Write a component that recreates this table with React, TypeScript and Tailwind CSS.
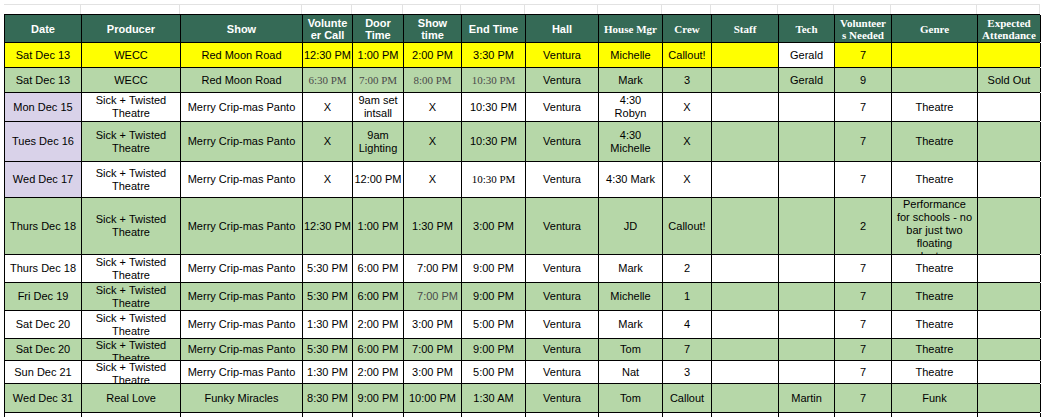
import React from 'react';
import { clsx } from 'clsx';

const COLS =
  'grid grid-cols-[77px_99px_122px_50px_51px_58px_64px_73px_64px_49px_67px_56px_57px_86px_63px]';

const Y = 'bg-[#ffff00]';
const G = 'bg-[#b6d7a8]';
const W = 'bg-white';
const L = 'bg-[#d9d2e9]';

type CellDef =
  | string
  | { t: string; bg?: string; serif?: boolean; gray?: boolean; right?: boolean };

type RowDef = { h: string; bg: string; c: CellDef[] };

const headers: { t: string; serif?: boolean }[] = [
  { t: 'Date' },
  { t: 'Producer' },
  { t: 'Show' },
  { t: 'Volunte\ner Call' },
  { t: 'Door\nTime' },
  { t: 'Show\ntime' },
  { t: 'End Time' },
  { t: 'Hall' },
  { t: 'House Mgr', serif: true },
  { t: 'Crew', serif: true },
  { t: 'Staff', serif: true },
  { t: 'Tech', serif: true },
  { t: 'Volunteer\ns Needed', serif: true },
  { t: 'Genre', serif: true },
  { t: 'Expected\nAttendance', serif: true },
];

const STW = 'Sick + Twisted\nTheatre';
const PANTO = 'Merry Crip-mas Panto';

const rows: RowDef[] = [
  {
    h: 'h-[25px]',
    bg: Y,
    c: ['Sat Dec 13', 'WECC', 'Red Moon Road', '12:30 PM', '1:00 PM', '2:00 PM', '3:30 PM', 'Ventura', 'Michelle', 'Callout!', '', { t: 'Gerald', bg: W }, '7', '', ''],
  },
  {
    h: 'h-[25px]',
    bg: G,
    c: [
      'Sat Dec 13', 'WECC', 'Red Moon Road',
      { t: '6:30 PM', serif: true, gray: true },
      { t: '7:00 PM', serif: true, gray: true },
      { t: '8:00 PM', serif: true, gray: true },
      { t: '10:30 PM', serif: true, gray: true },
      'Ventura', 'Mark', '3', '', 'Gerald', '9', '', 'Sold Out',
    ],
  },
  {
    h: 'h-[29px]',
    bg: W,
    c: [{ t: 'Mon Dec 15', bg: L }, STW, PANTO, 'X', '9am set\nintsall', 'X', '10:30 PM', 'Ventura', '4:30\nRobyn', 'X', '', '', '7', 'Theatre', ''],
  },
  {
    h: 'h-[40px]',
    bg: G,
    c: [{ t: 'Tues Dec 16', bg: L }, STW, PANTO, 'X', '9am\nLighting', 'X', '10:30 PM', 'Ventura', '4:30\nMichelle', 'X', '', '', '7', 'Theatre', ''],
  },
  {
    h: 'h-[36px]',
    bg: W,
    c: [{ t: 'Wed Dec 17', bg: L }, STW, PANTO, 'X', '12:00 PM', 'X', { t: '10:30 PM', serif: true }, 'Ventura', '4:30 Mark', 'X', '', '', '7', 'Theatre', ''],
  },
  {
    h: 'h-[57px]',
    bg: G,
    c: ['Thurs Dec 18', STW, PANTO, '12:30 PM', '1:00 PM', '1:30 PM', '3:00 PM', 'Ventura', 'JD', 'Callout!', '', '', '2', 'Performance\nfor schools - no\nbar just two\nfloating\nvolunteers', ''],
  },
  {
    h: 'h-[28px]',
    bg: W,
    c: ['Thurs Dec 18', STW, PANTO, '5:30 PM', '6:00 PM', { t: '7:00 PM', right: true }, '9:00 PM', 'Ventura', 'Mark', '2', '', '', '7', 'Theatre', ''],
  },
  {
    h: 'h-[28px]',
    bg: G,
    c: ['Fri Dec 19', STW, PANTO, '5:30 PM', '6:00 PM', { t: '7:00 PM', right: true, gray: true }, '9:00 PM', 'Ventura', 'Michelle', '1', '', '', '7', 'Theatre', ''],
  },
  {
    h: 'h-[28px]',
    bg: W,
    c: ['Sat Dec 20', STW, PANTO, '1:30 PM', '2:00 PM', '3:00 PM', '5:00 PM', 'Ventura', 'Mark', '4', '', '', '7', 'Theatre', ''],
  },
  {
    h: 'h-[22px]',
    bg: G,
    c: ['Sat Dec 20', STW, PANTO, '5:30 PM', '6:00 PM', '7:00 PM', '9:00 PM', 'Ventura', 'Tom', '7', '', '', '7', 'Theatre', ''],
  },
  {
    h: 'h-[23px]',
    bg: W,
    c: ['Sun Dec 21', STW, PANTO, '1:30 PM', '2:00 PM', '3:00 PM', '5:00 PM', 'Ventura', 'Nat', '3', '', '', '7', 'Theatre', ''],
  },
  {
    h: 'h-[29px]',
    bg: G,
    c: ['Wed Dec 31', 'Real Love', 'Funky Miracles', '8:30 PM', '9:00 PM', '10:00 PM', '1:30 AM', 'Ventura', 'Tom', 'Callout', '', 'Martin', '7', 'Funk', ''],
  },
  {
    h: 'h-[30px]',
    bg: W,
    c: ['', '', '', '', '', '', '', '', '', '', '', '', '', '', ''],
  },
];

const Cell = ({ def, rowBg }: { def: CellDef; rowBg: string }) => {
  const d = typeof def === 'string' ? { t: def } : def;
  return (
    <div
      className={clsx(
        'flex overflow-hidden border-r border-black [align-items:safe_center]',
        d.right ? 'justify-end pr-[3px]' : 'justify-center',
        d.bg ?? rowBg
      )}
    >
      <span
        className={clsx(
          'block whitespace-pre text-center text-[11px] leading-[13px]',
          d.serif ? "font-['Liberation_Serif',serif]" : "font-['Liberation_Sans',Arial,sans-serif]",
          d.gray ? 'text-[#4a4a4a]' : 'text-black'
        )}
      >
        {d.t}
      </span>
    </div>
  );
};

export default function App() {
  return (
    <div className="h-[417px] w-[1052px] overflow-hidden bg-white">
      {/* frozen top row, mostly scrolled away */}
      <div className="h-[14px] pt-[4px] pl-[4px]">
        <div className={clsx(COLS, 'h-[10px] w-[1036px] border-t border-[#e2e2e2]')}>
          {headers.map((h) => (
            <div key={h.t} className="border-r border-[#e2e2e2]" />
          ))}
        </div>
      </div>

      <div className="pl-[4px]">
        {/* header */}
        <div className={clsx(COLS, 'h-[29px] w-[1036px] border-y border-l border-black bg-[#356a56]')}>
          {headers.map((h) => (
            <div
              key={h.t}
              className="flex items-center justify-center overflow-hidden border-r border-black"
            >
              <span
                className={clsx(
                  'whitespace-pre text-center text-[11px] font-bold leading-[12px] text-white',
                  h.serif ? "font-['Liberation_Serif',serif]" : "font-['Liberation_Sans',Arial,sans-serif]"
                )}
              >
                {h.t}
              </span>
            </div>
          ))}
        </div>

        {rows.map((r, i) => (
          <div key={i} className={clsx(COLS, r.h, 'w-[1036px] border-b border-l border-black')}>
            {r.c.map((c, j) => (
              <Cell key={j} def={c} rowBg={r.bg} />
            ))}
          </div>
        ))}
      </div>
    </div>
  );
}
